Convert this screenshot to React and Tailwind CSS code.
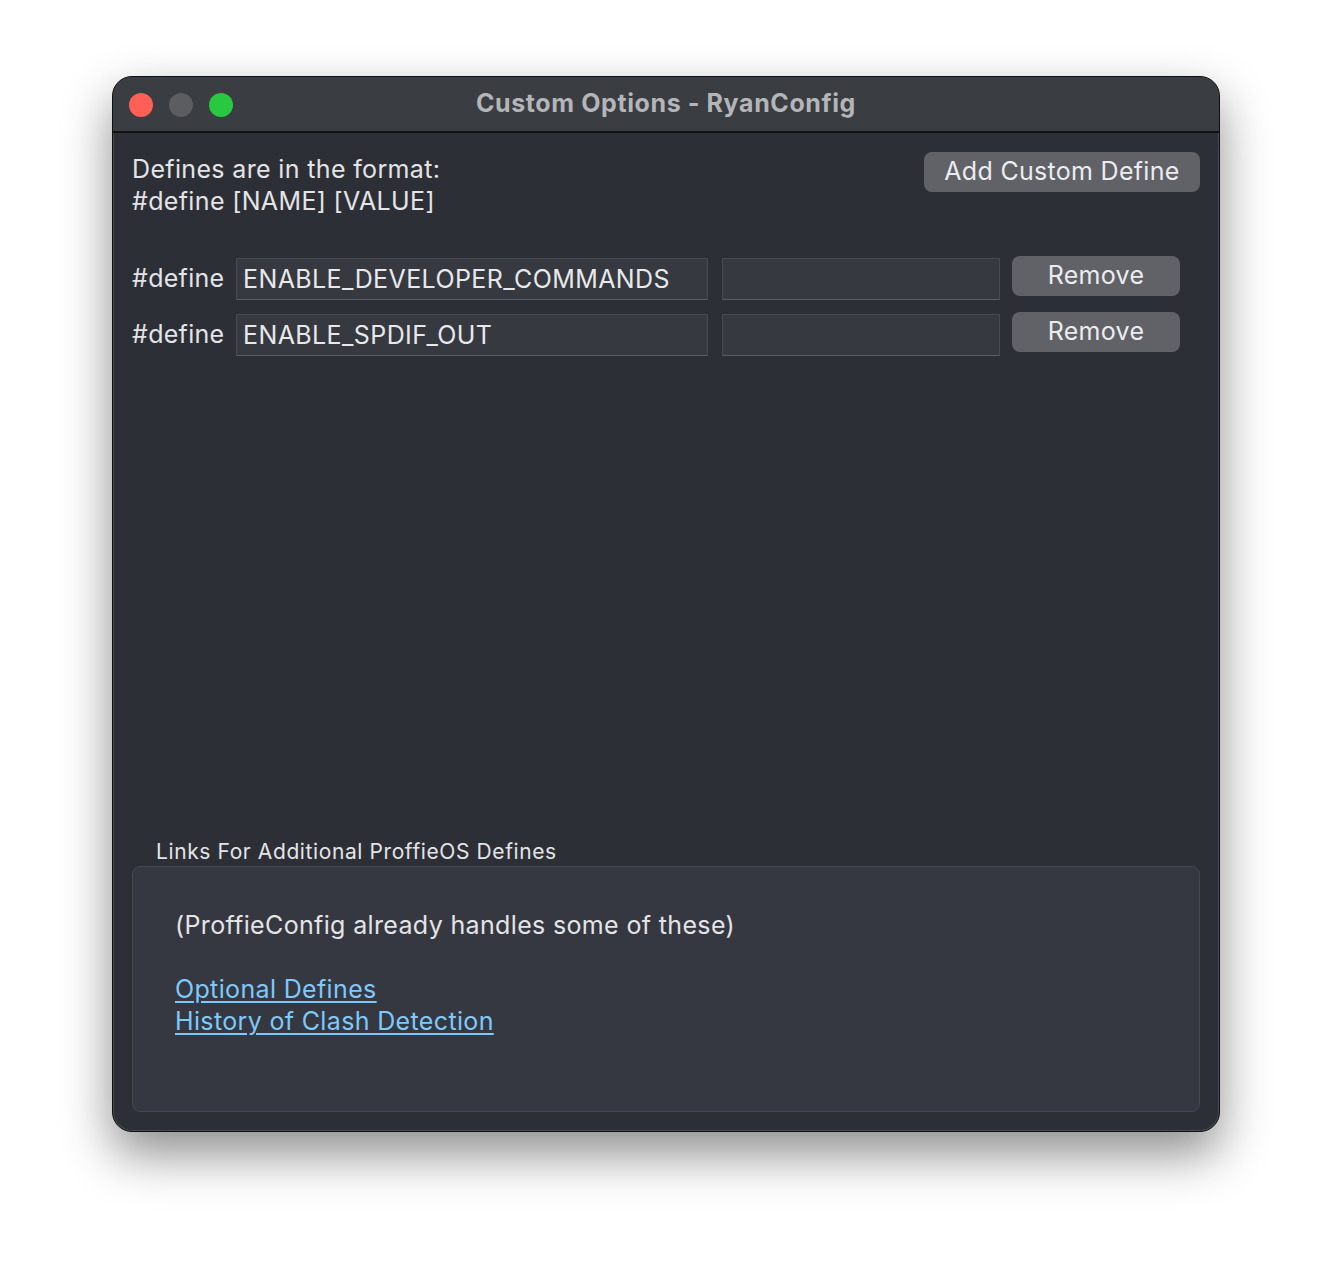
const DEFINES = [
  { name: "ENABLE_DEVELOPER_COMMANDS", value: "" },
  { name: "ENABLE_SPDIF_OUT", value: "" },
];

function TrafficLights() {
  return (
    <div className="absolute left-[16px] top-[16px] flex gap-[16px]">
      <div className="w-[24px] h-[24px] rounded-full bg-[#fe5f57]" />
      <div className="w-[24px] h-[24px] rounded-full bg-[#5b5d61]" />
      <div className="w-[24px] h-[24px] rounded-full bg-[#28c840]" />
    </div>
  );
}

function DefineRow({ name, value }) {
  return (
    <div className="flex items-center h-[42px]">
      <span className="w-[104px] text-[25px] tracking-[0.3px] text-[#e4e4e6]">#define</span>
      <input
        type="text"
        defaultValue={name}
        className="w-[472px] h-[42px] px-[6px] bg-[#363940] border border-[#474a50] border-b-[#5a5d63] text-[25px] tracking-[0.4px] text-[#e8e8ea] outline-none"
      />
      <input
        type="text"
        defaultValue={value}
        className="ml-[14px] w-[278px] h-[42px] px-[6px] bg-[#363940] border border-[#474a50] border-b-[#5a5d63] text-[25px] text-[#e8e8ea] outline-none"
      />
      <button className="ml-[12px] w-[168px] h-[40px] -mt-[6px] rounded-[8px] bg-[#606267] text-[25px] tracking-[0.3px] text-[#ececee]">
        Remove
      </button>
    </div>
  );
}

export default function App() {
  return (
    <div
      className="min-h-[1280px] bg-white pt-[76px] pl-[112px]"
      style={{ fontFamily: "Inter, 'Noto Sans', sans-serif" }}
    >
      <div className="w-[1108px] h-[1056px] rounded-[20px] bg-[#2d2f36] border border-[#0f1012] shadow-[0_22px_50px_rgba(0,0,0,0.45),inset_0_0_0_1px_rgba(255,255,255,0.14)] overflow-hidden flex flex-col">
        {/* Title bar */}
        <div className="relative h-[56px] shrink-0 bg-[#3a3d41] border-b-2 border-[#121315] flex items-center justify-center">
          <TrafficLights />
          <span className="text-[25px] font-bold text-[#b3b5b8] tracking-[0.6px]">
            Custom Options - RyanConfig
          </span>
        </div>

        {/* Body */}
        <div className="flex-1 flex flex-col px-[19px] pb-[19px] pt-[20px]">
          <div className="flex justify-between items-start">
            <div className="text-[25px] leading-[32px] tracking-[0.35px] text-[#e4e4e6]">
              <div>Defines are in the format:</div>
              <div>#define [NAME] [VALUE]</div>
            </div>
            <button className="-mt-[1px] w-[276px] h-[40px] rounded-[8px] bg-[#606267] text-[25px] tracking-[0.3px] text-[#ececee]">
              Add Custom Define
            </button>
          </div>

          <div className="mt-[41px] flex flex-col gap-[14px]">
            {DEFINES.map((d) => (
              <DefineRow key={d.name} name={d.name} value={d.value} />
            ))}
          </div>

          <div className="flex-1" />

          {/* Links group */}
          <div className="pl-[24px] pb-[2px] text-[21px] leading-[24px] tracking-[0.6px] text-[#e4e4e6]">
            Links For Additional ProffieOS Defines
          </div>
          <div className="h-[246px] rounded-[8px] bg-[#353840] border border-[#45484e] pl-[42px] pt-[42px]">
            <div className="text-[25px] leading-[32px] tracking-[0.35px] text-[#e4e4e6]">
              (ProffieConfig already handles some of these)
            </div>
            <div className="mt-[32px] flex flex-col items-start text-[25px] leading-[32px] tracking-[0.35px] text-[#7ec9fa]">
              <a href="#" className="underline decoration-2 underline-offset-[3px]">
                Optional Defines
              </a>
              <a href="#" className="underline decoration-2 underline-offset-[3px]">
                History of Clash Detection
              </a>
            </div>
          </div>
        </div>
      </div>
    </div>
  );
}
